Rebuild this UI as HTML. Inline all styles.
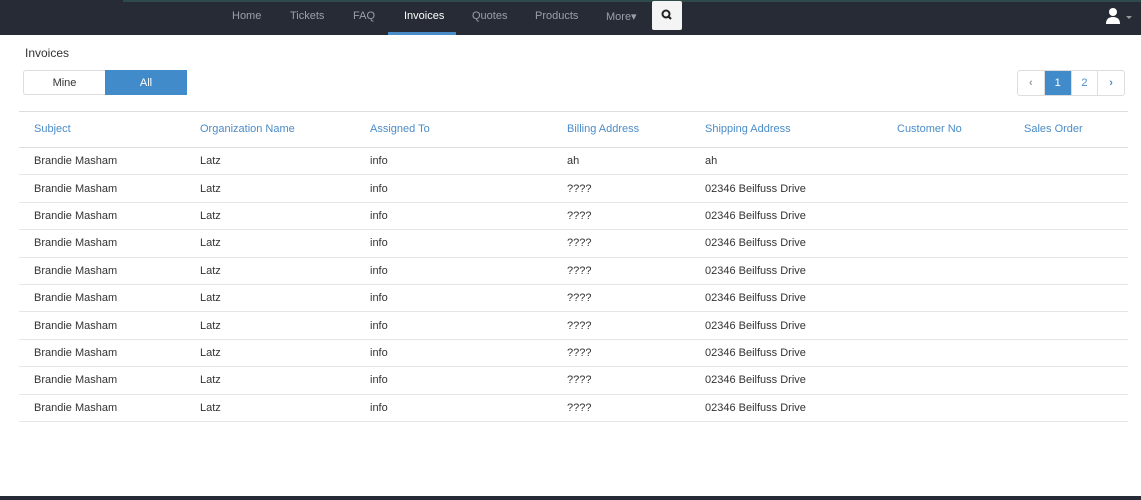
<!DOCTYPE html><html><head><style>
body{margin:0;width:1141px;height:500px;background:#fff;font-family:"Liberation Sans",sans-serif;font-size:11px;color:#333;position:relative;overflow:hidden}
.nav{position:absolute;left:0;top:0;width:1141px;height:35px;background:#262b35}
.tl{position:absolute;left:123px;top:0;width:1018px;height:2px;background:#2f4a4a}
.nav a{position:absolute;top:10px;color:#9aa0a8;font-size:11px}
.ul{position:absolute;left:388px;top:32px;width:68px;height:3px;background:#4a8cc8}
.srch{position:absolute;left:652px;top:1px;width:30px;height:29px;background:#f4f4f4;border-radius:2px}
.title{position:absolute;left:25px;top:46px;font-size:12px}
.btn{position:absolute;top:70px;height:24px;line-height:24px;text-align:center;font-size:11px}
.pg{position:absolute;top:70px;height:24px;border:1px solid #ddd;border-radius:3px;left:1017px;width:106px;display:flex}
.pg div{width:26px;text-align:center;line-height:24px;border-right:1px solid #ddd;color:#4a8cc8}
table{position:absolute;left:19px;top:111px;width:1109px;border-collapse:collapse;border-top:1px solid #ddd;table-layout:fixed}
td{height:26.4px;border-bottom:1px solid #e6e6e6;padding:0;font-size:11px}
th{height:34px;text-align:left;font-weight:normal;color:#4a8cc8;border-bottom:1px solid #ddd;font-size:11px;padding:0 0 1px 0}
.bot{position:absolute;left:0;top:496px;width:1141px;height:4px;background:#262b35}
</style></head><body>
<div class="nav"><div class="tl"></div>
<a style="left:232px">Home</a><a style="left:290px">Tickets</a><a style="left:353px">FAQ</a><a style="left:404px;color:#fff">Invoices</a><a style="left:472px">Quotes</a><a style="left:535px">Products</a><a style="left:606px">More▾</a>
<div class="ul"></div>
<div class="srch"><svg width="30" height="29"><circle cx="14" cy="13" r="3.5" stroke="#222" stroke-width="2" fill="none"/><line x1="16.5" y1="15.5" x2="19" y2="18" stroke="#222" stroke-width="2.2"/></svg></div>
<svg style="position:absolute;left:1104px;top:6px" width="30" height="20"><circle cx="9" cy="6" r="4" fill="#fff"/><path d="M2 18 Q2 11 9 11 Q16 11 16 18Z" fill="#fff"/><path d="M22 10 L28 10 L25 13Z" fill="#999"/></svg>
</div>
<div class="title">Invoices</div>
<div class="btn" style="left:23px;width:81px;border:1px solid #ddd;border-radius:3px 0 0 3px;height:23px">Mine</div>
<div class="btn" style="left:105px;width:82px;background:#428bca;color:#fff;height:25px;line-height:26px">All</div>
<div class="pg"><div style="color:#999;font-weight:bold">‹</div><div style="background:#428bca;color:#fff">1</div><div>2</div><div style="border:none;font-weight:bold">›</div></div>
<table>
<colgroup><col style="width:181px"><col style="width:170px"><col style="width:197px"><col style="width:138px"><col style="width:192px"><col style="width:127px"><col></colgroup>
<tr><th style="padding-left:15px">Subject</th><th>Organization Name</th><th>Assigned To</th><th>Billing Address</th><th>Shipping Address</th><th>Customer No</th><th>Sales Order</th></tr>
<tr><td style="padding-left:15px">Brandie Masham</td><td>Latz</td><td>info</td><td>ah</td><td>ah</td><td></td><td></td></tr>
<tr><td style="padding-left:15px">Brandie Masham</td><td>Latz</td><td>info</td><td>????</td><td>02346 Beilfuss Drive</td><td></td><td></td></tr>
<tr><td style="padding-left:15px">Brandie Masham</td><td>Latz</td><td>info</td><td>????</td><td>02346 Beilfuss Drive</td><td></td><td></td></tr>
<tr><td style="padding-left:15px">Brandie Masham</td><td>Latz</td><td>info</td><td>????</td><td>02346 Beilfuss Drive</td><td></td><td></td></tr>
<tr><td style="padding-left:15px">Brandie Masham</td><td>Latz</td><td>info</td><td>????</td><td>02346 Beilfuss Drive</td><td></td><td></td></tr>
<tr><td style="padding-left:15px">Brandie Masham</td><td>Latz</td><td>info</td><td>????</td><td>02346 Beilfuss Drive</td><td></td><td></td></tr>
<tr><td style="padding-left:15px">Brandie Masham</td><td>Latz</td><td>info</td><td>????</td><td>02346 Beilfuss Drive</td><td></td><td></td></tr>
<tr><td style="padding-left:15px">Brandie Masham</td><td>Latz</td><td>info</td><td>????</td><td>02346 Beilfuss Drive</td><td></td><td></td></tr>
<tr><td style="padding-left:15px">Brandie Masham</td><td>Latz</td><td>info</td><td>????</td><td>02346 Beilfuss Drive</td><td></td><td></td></tr>
<tr><td style="padding-left:15px">Brandie Masham</td><td>Latz</td><td>info</td><td>????</td><td>02346 Beilfuss Drive</td><td></td><td></td></tr>
</table>
<div class="bot"></div>
</body></html>
